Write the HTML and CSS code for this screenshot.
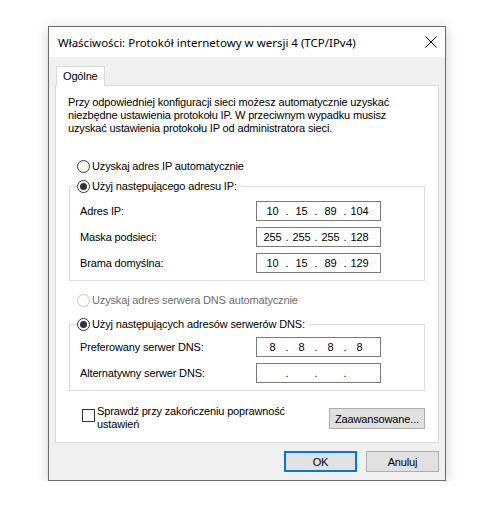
FILE: index.html
```html
<!DOCTYPE html>
<html lang="pl">
<head>
<meta charset="utf-8">
<title>Właściwości: Protokół internetowy w wersji 4 (TCP/IPv4)</title>
<link rel="stylesheet" href="styles.css">
</head>
<body>
<div class="dialog">
  <div class="titlebar">
    <span class="title">Właściwości: Protokół internetowy w wersji 4 (TCP/IPv4)</span>
    <svg class="close" width="12" height="12" viewBox="0 0 12 12"><path d="M0.5 0.5 L11.5 11.5 M11.5 0.5 L0.5 11.5" stroke="#000" stroke-width="1" fill="none"/></svg>
  </div>
  <div class="body">
    <div class="tabs"><div class="tab">Ogólne</div></div>
    <div class="panel">
      <p class="intro">Przy odpowiedniej konfiguracji sieci możesz automatycznie uzyskać niezbędne ustawienia protokołu IP. W przeciwnym wypadku musisz uzyskać ustawienia protokołu IP od administratora sieci.</p>
      <div class="radio first"><span class="rb"></span><span>Uzyskaj adres IP automatycznie</span></div>
      <fieldset class="group">
        <legend><span class="radio"><span class="rb on"></span><span>Użyj następującego adresu IP:</span></span></legend>
        <div class="row"><span>Adres IP:</span>
          <div class="ip"><span class="f">10</span><span class="d">.</span><span class="f">15</span><span class="d">.</span><span class="f">89</span><span class="d">.</span><span class="f">104</span></div></div>
        <div class="row"><span>Maska podsieci:</span>
          <div class="ip"><span class="f">255</span><span class="d">.</span><span class="f">255</span><span class="d">.</span><span class="f">255</span><span class="d">.</span><span class="f">128</span></div></div>
        <div class="row"><span>Brama domyślna:</span>
          <div class="ip"><span class="f">10</span><span class="d">.</span><span class="f">15</span><span class="d">.</span><span class="f">89</span><span class="d">.</span><span class="f">129</span></div></div>
      </fieldset>
      <div class="radio disabled"><span class="rb"></span><span>Uzyskaj adres serwera DNS automatycznie</span></div>
      <fieldset class="group dns">
        <legend><span class="radio"><span class="rb on"></span><span>Użyj następujących adresów serwerów DNS:</span></span></legend>
        <div class="row"><span>Preferowany serwer DNS:</span>
          <div class="ip"><span class="f">8</span><span class="d">.</span><span class="f">8</span><span class="d">.</span><span class="f">8</span><span class="d">.</span><span class="f">8</span></div></div>
        <div class="row"><span>Alternatywny serwer DNS:</span>
          <div class="ip"><span class="f"></span><span class="d">.</span><span class="f"></span><span class="d">.</span><span class="f"></span><span class="d">.</span><span class="f"></span></div></div>
      </fieldset>
      <div class="bottom">
        <div class="check"><span class="cb"></span><span>Sprawdź przy zakończeniu poprawność<br>ustawień</span></div>
        <button class="btn adv">Zaawansowane...</button>
      </div>
    </div>
    <div class="buttons">
      <button class="btn ok">OK</button>
      <button class="btn">Anuluj</button>
    </div>
  </div>
</div>
</body>
</html>
```

FILE: styles.css
```css
* { box-sizing: border-box; }
html, body { margin: 0; background: #fff; }
body { padding: 26px 0 0 48px; font-family: "Liberation Sans", Arial, sans-serif; font-size: 11px; letter-spacing: -0.15px; color: #000; }

.dialog {
  width: 398px;
  height: 455px;
  border: 1px solid #6b6b6b;
  background: #f0f0f0;
  box-shadow: 0 2px 12px rgba(0,0,0,0.2);
  display: flex;
  flex-direction: column;
}
.titlebar {
  height: 31px;
  background: #fff;
  display: flex;
  align-items: center;
  justify-content: space-between;
  padding: 0 8px 0 9px;
}
.title { font-family: "Noto Sans", sans-serif; font-size: 11.5px; letter-spacing: 0; }
.close { display: block; }

.body { flex: 1; padding: 9px 6px 8px 6px; display: flex; flex-direction: column; }
.tabs { display: flex; padding-left: 1px; }
.tab {
  height: 20px;
  line-height: 18px;
  padding: 0 6px;
  background: #fff;
  border: 1px solid #d9d9d9;
  border-bottom: none;
  margin-bottom: -1px;
  position: relative;
  z-index: 1;
}
.panel {
  height: 358px;
  background: #fff;
  border: 1px solid #d9d9d9;
  padding: 10px 13px 0 13px;
}
.intro { margin: 0 0 0 -1px; line-height: 13px; }

.radio { display: flex; align-items: center; height: 13px; line-height: 13px; }
.radio .rb {
  width: 13px; height: 13px;
  border: 1px solid #333;
  border-radius: 50%;
  margin-right: 2px;
  display: flex; align-items: center; justify-content: center;
  background: #fff;
}
.radio .rb.on::after { content: ""; width: 7px; height: 7px; border-radius: 50%; background: #333; }
.radio.first { margin: 25px 0 0 8px; }
.radio.disabled { margin: 13px 0 0 8px; color: #6d6d6d; }
.radio.disabled .rb { border-color: #c4c4c4; }

.group {
  margin: 7px 0 0 0;
  border: 1px solid #dcdcdc;
  padding: 0 43px 7px 10px;
  min-width: 0;
}
.group.dns { margin-top: 11px; }
.group legend { padding: 0 4px 0 0; margin-left: -3px; }
.row { display: flex; justify-content: space-between; align-items: center; height: 20px; margin-top: 6px; }
.group legend + .row { margin-top: 8px; }
.group.dns legend + .row { margin-top: 6px; }

.ip {
  width: 125px; height: 20px;
  border: 1px solid #7a7a7a;
  background: #fff;
  display: flex; align-items: center;
  padding-left: 3px;
}
.ip .f { width: 25px; text-align: center; }
.ip .d { width: 4px; text-align: center; }

.bottom { display: flex; justify-content: space-between; margin-top: 14px; }
.check { display: flex; align-items: flex-start; margin-left: 13px; line-height: 13px; }
.cb { width: 13px; height: 13px; border: 1px solid #333; background: #fff; margin: 4px 2px 0 0; flex: none; }

.btn {
  font-family: "Liberation Sans", Arial, sans-serif;
  font-size: 11px;
  letter-spacing: -0.15px;
  color: #000;
  background: #e1e1e1;
  border: 1px solid #adadad;
  height: 21px;
  padding: 0;
  margin: 0;
}
.adv { width: 96px; margin-top: 3px; }
.buttons { display: flex; justify-content: flex-end; gap: 9px; margin-top: 8px; }
.buttons .btn { width: 73px; }
.btn.ok { border: 2px solid #0078d7; }
```
